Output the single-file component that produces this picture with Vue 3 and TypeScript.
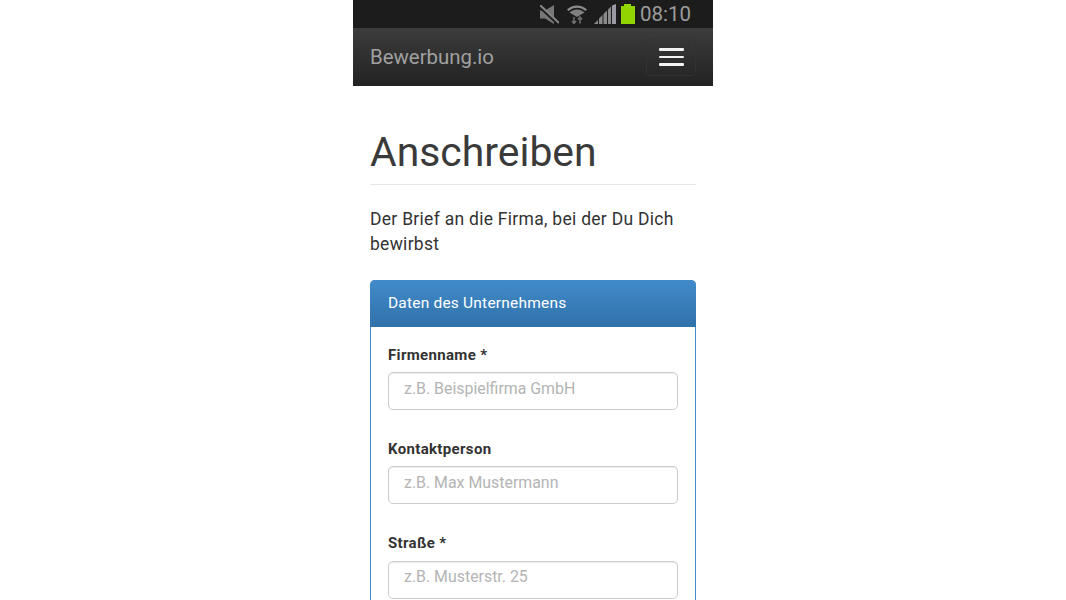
<template>
  <div class="phone">
    <!-- status bar -->
    <div class="statusbar">
      <svg class="ic mute" width="19" height="19" viewBox="0 0 19 19">
        <path d="M0 5.500h5L14 0v19L5 13.500H0z" fill="#777" />
        <path d="M0 1.500 18 18.500" stroke="#1c1c1c" stroke-width="3.500" />
        <path d="M0 0 19 18" stroke="#858585" stroke-width="2" />
      </svg>
      <svg class="ic wifi" width="20" height="20" viewBox="0 0 20 20">
        <path d="M0 5.500C5.500 0 14.500 0 20 5.500l-1.500 1.500C13.500 2.500 6.500 2.500 1.500 7z" fill="#8c8c8c" />
        <path d="M2.500 8.500C7 4.500 13 4.500 17.500 8.500L10 13z" fill="#7f7f7f" />
        <path d="M7 13v6M5 17l2 2.500 2-2.500M13 19.500v-6M11 15.500l2-2.500 2 2.500" fill="none" stroke="#6c6c6c" stroke-width="1.600" />
      </svg>
      <svg class="ic signal" width="22" height="20" viewBox="0 0 22 20">
        <path d="M0 20l4-4v4zM5 20v-5.500l3.500-3.500V20zM9.500 20V10L13 6.500V20zM14 20V5.500L17 2.500V20z" fill="#8a8a8a" />
        <path d="M18 20V1.500L22 0v20z" fill="#9a9aa2" />
      </svg>
      <div class="battery"><span class="cap"></span><span class="cell"></span></div>
      <span class="clock">08:10</span>
    </div>

    <!-- navbar -->
    <nav class="navbar">
      <span class="brand">Bewerbung.io</span>
      <button class="toggle" type="button">
        <span v-for="n in 3" :key="n" class="bar"></span>
      </button>
    </nav>

    <main class="content">
      <h1>Anschreiben</h1>
      <p class="lead">Der Brief an die Firma, bei der Du Dich bewirbst</p>

      <section class="panel">
        <div class="panel-heading">Daten des Unternehmens</div>
        <div class="panel-body">
          <div v-for="f in fields" :key="f.label" class="field">
            <label>{{ f.label }}</label>
            <input type="text" :placeholder="f.placeholder" />
          </div>
        </div>
      </section>
    </main>
  </div>
</template>

<script setup lang="ts">
const fields: { label: string; placeholder: string }[] = [
  { label: 'Firmenname *', placeholder: 'z.B. Beispielfirma GmbH' },
  { label: 'Kontaktperson', placeholder: 'z.B. Max Mustermann' },
  { label: 'Straße *', placeholder: 'z.B. Musterstr. 25' },
]
</script>

<style>
html, body {
  margin: 0;
  height: 600px;
  overflow: hidden;
  background: #fff;
}
</style>

<style scoped>
.phone {
  width: 360px;
  height: 600px;
  overflow: hidden;
  margin: 0 auto;
  font-family: Roboto, "Liberation Sans", sans-serif;
  color: #333;
}

/* status bar */
.statusbar {
  height: 28px;
  background: #1c1c1c;
  display: flex;
  align-items: center;
  justify-content: flex-end;
  padding-right: 22px;
  box-sizing: border-box;
}
.ic {
  display: block;
  flex: none;
}
.mute { margin-right: 8px; }
.wifi { margin-right: 7px; }
.battery {
  width: 14px;
  height: 20px;
  margin-left: 5px;
  display: flex;
  flex-direction: column;
  align-items: center;
}
.cap {
  width: 7px;
  height: 2px;
  background: #92d400;
}
.cell {
  width: 14px;
  height: 18px;
  background: #92d400;
}
.clock {
  margin-left: 5px;
  font-size: 20.500px;
  color: #9c9c9c;
  line-height: 28px;
}

/* navbar */
.navbar {
  height: 58px;
  background: linear-gradient(#3c3c3c, #222);
  display: flex;
  align-items: center;
  justify-content: space-between;
  padding: 0 17px;
  box-sizing: border-box;
}
.brand {
  font-size: 20.400px;
  color: #a0a0a0;
}
.toggle {
  width: 50px;
  height: 38px;
  padding: 0;
  background: transparent;
  border: 1px solid #333;
  border-radius: 5px;
  display: flex;
  flex-direction: column;
  align-items: center;
  justify-content: center;
  gap: 5px;
}
.bar {
  width: 25px;
  height: 2.500px;
  background: #f2f2f2;
  border-radius: 1px;
}

/* content */
.content {
  padding: 0 17px;
}
h1 {
  margin: 0;
  padding: 41px 0 7px;
  font-size: 40.900px;
  font-weight: 400;
  line-height: 50px;
  color: #3a3a3a;
  border-bottom: 1px solid #e6e6e6;
}
.lead {
  margin: 22px 0 23px;
  font-size: 17.500px;
  line-height: 25px;
  letter-spacing: 0.280px;
}

.panel {
  border: 1px solid #428bca;
  border-bottom: 0;
  border-radius: 5px 5px 0 0;
}
.panel-heading {
  margin: -1px -1px 0;
  height: 47px;
  padding: 0 18px 2px;
  box-sizing: border-box;
  display: flex;
  align-items: center;
  font-size: 15.500px;
  letter-spacing: 0.200px;
  color: #fff;
  background: linear-gradient(#428bca, #3071a9);
  border-radius: 5px 5px 0 0;
}
.panel-body {
  padding: 17.500px 17px 20px;
}
.field {
  margin-bottom: 28.800px;
}
label {
  display: block;
  margin-bottom: 7.500px;
  font-size: 15px;
  font-weight: 700;
  line-height: 20px;
  letter-spacing: 0.340px;
}
input {
  display: block;
  width: 100%;
  height: 38px;
  box-sizing: border-box;
  padding: 0 15px 6px;
  border: 1px solid #ccc;
  border-radius: 5px;
  font-family: inherit;
  font-size: 15.900px;
  box-shadow: inset 0 1px 1px rgba(0, 0, 0, 0.075);
  outline: none;
}
input::placeholder {
  color: #b4b4b4;
}
</style>
